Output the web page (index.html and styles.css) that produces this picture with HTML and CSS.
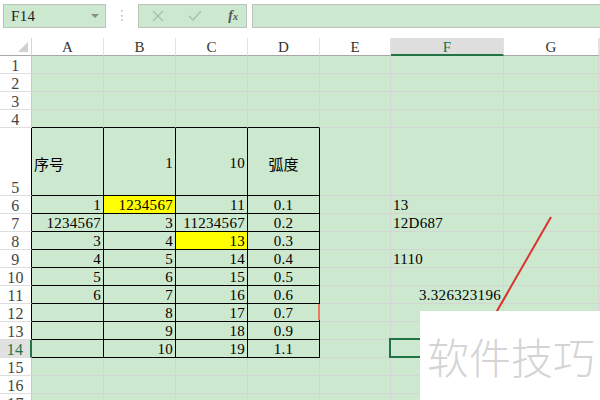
FILE: index.html
```html
<!DOCTYPE html>
<html lang="zh-CN">
<head>
    <meta charset="UTF-8">
    <title>表格</title>
    <link rel="stylesheet" href="styles.css">
</head>
<body>
<div class="toolbar">
    <div class="namebox"><span>F14</span><i class="caret"></i></div>
    <div class="dots">⋮</div>
    <div class="fxbox">
        <svg width="14" height="14" viewBox="0 0 14 14"><path d="M2 2L12 12M12 2L2 12" stroke="#a9bfaa" stroke-width="1.3" fill="none"/></svg>
        <svg width="16" height="14" viewBox="0 0 16 14"><path d="M2 7L6 11L14 2" stroke="#a9bfaa" stroke-width="1.3" fill="none"/></svg>
        <span class="fx">f<small>x</small></span>
    </div>
    <div class="formula"></div>
</div>

<div class="sheet">
    <div class="row head">
        <div class="corner"><svg width="10" height="10" viewBox="0 0 10 10"><polygon points="10,0 10,10 0,10" fill="#d0d0d0"/></svg></div>
        <div class="ch">A</div><div class="ch">B</div><div class="ch">C</div><div class="ch">D</div>
        <div class="ch">E</div><div class="ch on">F</div><div class="ch">G</div><div class="ch"></div>
    </div>
    <div class="row">
        <div class="rh">1</div><div class="c"></div><div class="c"></div><div class="c"></div><div class="c"></div>
        <div class="c"></div><div class="c"></div><div class="c"></div><div class="c"></div>
    </div>
    <div class="row">
        <div class="rh">2</div><div class="c"></div><div class="c"></div><div class="c"></div><div class="c"></div>
        <div class="c"></div><div class="c"></div><div class="c"></div><div class="c"></div>
    </div>
    <div class="row">
        <div class="rh">3</div><div class="c"></div><div class="c"></div><div class="c"></div><div class="c"></div>
        <div class="c"></div><div class="c"></div><div class="c"></div><div class="c"></div>
    </div>
    <div class="row">
        <div class="rh">4</div><div class="c top"></div><div class="c top"></div><div class="c top"></div><div class="c top"></div>
        <div class="c"></div><div class="c"></div><div class="c"></div><div class="c"></div>
    </div>
    <div class="row tall">
        <div class="rh in">5</div>
        <div class="c t"><span class="zh">序号</span></div>
        <div class="c t r">1</div>
        <div class="c t r">10</div>
        <div class="c t m"><span class="zh">弧度</span></div>
        <div class="c"></div><div class="c"></div><div class="c"></div><div class="c"></div>
    </div>
    <div class="row">
        <div class="rh in">6</div>
        <div class="c t r">1</div><div class="c t r y">1234567</div><div class="c t r">11</div><div class="c t m">0.1</div>
        <div class="c"></div><div class="c">13</div><div class="c"></div><div class="c"></div>
    </div>
    <div class="row">
        <div class="rh in">7</div>
        <div class="c t r">1234567</div><div class="c t r">3</div><div class="c t r">11234567</div><div class="c t m">0.2</div>
        <div class="c"></div><div class="c">12D687</div><div class="c"></div><div class="c"></div>
    </div>
    <div class="row">
        <div class="rh in">8</div>
        <div class="c t r">3</div><div class="c t r">4</div><div class="c t r y">13</div><div class="c t m">0.3</div>
        <div class="c"></div><div class="c"></div><div class="c"></div><div class="c"></div>
    </div>
    <div class="row">
        <div class="rh in">9</div>
        <div class="c t r">4</div><div class="c t r">5</div><div class="c t r">14</div><div class="c t m">0.4</div>
        <div class="c"></div><div class="c">1110</div><div class="c"></div><div class="c"></div>
    </div>
    <div class="row">
        <div class="rh in">10</div>
        <div class="c t r">5</div><div class="c t r">6</div><div class="c t r">15</div><div class="c t m">0.5</div>
        <div class="c"></div><div class="c"></div><div class="c"></div><div class="c"></div>
    </div>
    <div class="row">
        <div class="rh in">11</div>
        <div class="c t r">6</div><div class="c t r">7</div><div class="c t r">16</div><div class="c t m">0.6</div>
        <div class="c"></div><div class="c r">3.326323196</div><div class="c"></div><div class="c"></div>
    </div>
    <div class="row">
        <div class="rh in">12</div>
        <div class="c t"></div><div class="c t r">8</div><div class="c t r">17</div><div class="c t m">0.7</div>
        <div class="c"></div><div class="c"></div><div class="c"></div><div class="c"></div>
    </div>
    <div class="row">
        <div class="rh in">13</div>
        <div class="c t"></div><div class="c t r">9</div><div class="c t r">18</div><div class="c t m">0.9</div>
        <div class="c"></div><div class="c"></div><div class="c"></div><div class="c"></div>
    </div>
    <div class="row">
        <div class="rh in cur">14</div>
        <div class="c t"></div><div class="c t r">10</div><div class="c t r">19</div><div class="c t m">1.1</div>
        <div class="c"></div><div class="c cur"></div><div class="c"></div><div class="c"></div>
    </div>
    <div class="row">
        <div class="rh">15</div><div class="c"></div><div class="c"></div><div class="c"></div><div class="c"></div>
        <div class="c"></div><div class="c"></div><div class="c"></div><div class="c"></div>
    </div>
    <div class="row">
        <div class="rh">16</div><div class="c"></div><div class="c"></div><div class="c"></div><div class="c"></div>
        <div class="c"></div><div class="c"></div><div class="c"></div><div class="c"></div>
    </div>
    <div class="row">
        <div class="rh">17</div><div class="c"></div><div class="c"></div><div class="c"></div><div class="c"></div>
        <div class="c"></div><div class="c"></div><div class="c"></div><div class="c"></div>
    </div>
</div>

<svg class="marks" width="600" height="400" viewBox="0 0 600 400">
    <rect x="318" y="304" width="2" height="16" fill="#ec7b5e"/>
    <line x1="551" y1="217" x2="470" y2="358" stroke="#d9342e" stroke-width="2"/>
</svg>

<div class="watermark">软件技巧</div>
</body>
</html>
```

FILE: styles.css
```css
*{
    box-sizing: border-box;
}
body{
    margin: 0;
    width: 600px;
    height: 400px;
    overflow: hidden;
    position: relative;
    background: #fff;
    font-family: "Liberation Serif", "Noto Sans CJK SC", serif;
    font-size: 15px;
    color: #000;
}

/* top bar */
.toolbar{
    height: 38px;
    display: flex;
    align-items: flex-start;
    padding: 4px 0 0 3px;
}
.namebox{
    width: 103px;
    height: 24px;
    background: #cce8cf;
    border: 1px solid #bcc5bd;
    display: flex;
    align-items: center;
    justify-content: space-between;
    padding: 0 6px 0 7px;
    letter-spacing: 0.3px;
    color: #222;
}
.caret{
    width: 0;
    height: 0;
    border-left: 4px solid transparent;
    border-right: 4px solid transparent;
    border-top: 4px solid #8a8a8a;
}
.dots{
    width: 32px;
    height: 24px;
    text-align: center;
    line-height: 22px;
    color: #c4c4c4;
    font-family: "DejaVu Sans", sans-serif;
    font-size: 14px;
}
.fxbox{
    width: 109px;
    height: 24px;
    background: #cce8cf;
    border: 1px solid #bcc5bd;
    display: flex;
    align-items: center;
    padding: 0 8px 0 12px;
    gap: 22px;
}
.fx{
    margin-left: auto;
    font-style: italic;
    font-weight: bold;
    font-size: 14px;
    color: #555;
}
.fx small{
    font-size: 10px;
}
.formula{
    flex: 1;
    height: 24px;
    margin-left: 5px;
    background: #cce8cf;
    border: 1px solid #bcc5bd;
    border-right: none;
}

/* grid */
.row{
    display: grid;
    grid-template-columns: 32px 72px 72px 72px 72px 71px 113px 95px 1fr;
    height: 18px;
}
.row.tall{
    height: 68px;
}
.corner{
    border-right: 1px solid #d6d6d6;
    border-bottom: 1px solid #a8a8a8;
    display: flex;
    align-items: flex-end;
    justify-content: flex-end;
    padding: 0 3px 3px 0;
}
.ch{
    border-right: 1px solid #e2e2e2;
    border-bottom: 1px solid #a8a8a8;
    display: flex;
    align-items: center;
    justify-content: center;
    color: #333;
    line-height: 14px;
    padding-top: 1px;
}
.ch.on{
    background: #dedede;
    border-bottom: 2px solid #217346;
    color: #217346;
}
.rh{
    background: #fff;
    border-right: 1px solid #c8c8c8;
    border-bottom: 1px solid #dedede;
    display: flex;
    align-items: flex-end;
    justify-content: center;
    color: #444;
    line-height: 13px;
    letter-spacing: 0.3px;
    padding-bottom: 1px;
    font-size: 16px;
}
.rh.in{
    border-right-color: #000;
}
.rh.cur{
    background: #e1e1e1;
    color: #217346;
    border-right: 2px solid #217346;
}
.c{
    background: #cce8cf;
    border-right: 1px solid #d4d6d4;
    border-bottom: 1px solid #d4d6d4;
    display: flex;
    align-items: flex-end;
    padding: 0 2px 1px 2px;
    line-height: 13px;
    letter-spacing: 0.3px;
    white-space: nowrap;
}
.tall .c{
    align-items: center;
    padding-top: 5px;
}
.c.top{
    border-bottom-color: #000;
}
.c.t{
    border-right-color: #000;
    border-bottom-color: #000;
}
.c.r{
    justify-content: flex-end;
}
.c.m{
    justify-content: center;
}
.c.y{
    background: #ffff00;
}
.c.cur{
    position: relative;
}
.c.cur::after{
    content: "";
    position: absolute;
    left: -2px;
    top: -2px;
    right: -1px;
    bottom: -1px;
    border: 2px solid #217346;
}
.zh{
    font-family: "Noto Sans CJK SC", sans-serif;
    font-size: 15px;
    letter-spacing: 0;
    line-height: 16px;
}

/* overlays */
.marks{
    position: absolute;
    left: 0;
    top: 0;
    pointer-events: none;
}
.watermark{
    position: absolute;
    left: 420px;
    top: 311px;
    width: 180px;
    height: 89px;
    background: #fff;
    color: #d4d4d4;
    font-family: "Noto Sans CJK SC", sans-serif;
    font-weight: 300;
    font-size: 42px;
    line-height: 89px;
    padding-left: 7px;
    white-space: nowrap;
}
```
